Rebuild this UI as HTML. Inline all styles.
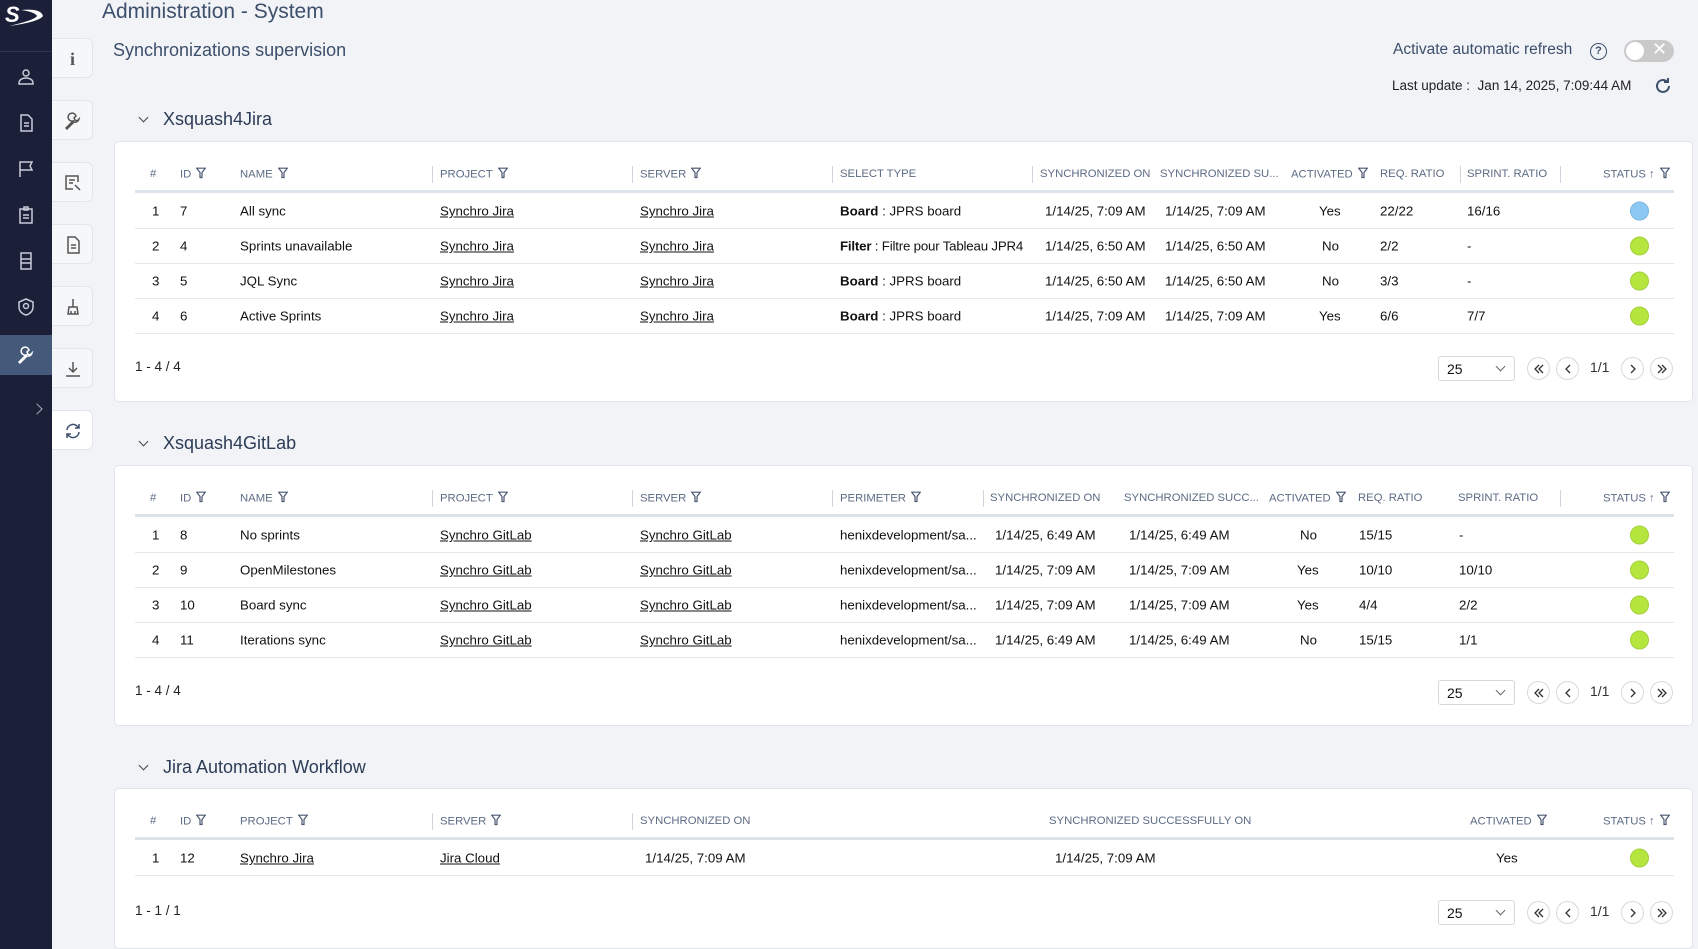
<!DOCTYPE html>
<html><head><meta charset="utf-8"><style>
*{box-sizing:border-box;margin:0;padding:0}
body{width:1698px;height:949px;background:#f1f3f7;font-family:"Liberation Sans",sans-serif;position:relative;overflow:hidden;color:#111}
.sb{position:absolute;left:0;top:0;width:52px;height:949px;background:#1b1f37}
.sb .i{position:absolute;left:16px;width:20px;height:20px;stroke:#c7ccd8;fill:none;stroke-width:1.5}
.tab{position:absolute;left:52px;width:41px;height:40px;background:#f6f7f9;border:1px solid #e2e6ec;border-left:none;border-radius:0 6px 6px 0}
.tab svg{position:absolute;left:11px;top:10px;width:20px;height:20px;stroke:#555;fill:none;stroke-width:1.5}
.t1{position:absolute;left:102px;top:0px;font-size:21px;color:#3d4f6b}
.t2{position:absolute;left:113px;top:40px;font-size:18px;color:#3d4f6b}
.sec{position:absolute;left:137px;font-size:18px;color:#2d3c55}
.sec:before{content:"";position:absolute;left:3px;top:5px;width:6px;height:6px;border-right:1.5px solid #444;border-bottom:1.5px solid #444;transform:rotate(45deg)}
.sec span{margin-left:26px}
.card{position:absolute;left:114px;width:1579px;background:#fff;border:1px solid #e1e5eb;border-radius:5px}
.r{position:absolute;left:20px;width:1539px;height:35px;border-bottom:1px solid #e3e7ec}
.h{position:absolute;left:20px;width:1539px;height:36px;top:15px;border-bottom:3px solid #dde3ea}
.r span,.h span{position:absolute;top:50%;transform:translateY(-50%);white-space:nowrap}
.r span{font-size:13.3px;color:#111}
.h span{font-size:11.3px;color:#5c6b84}
.h span.f:after{content:"";display:inline-block;margin-left:6px;width:9px;height:10px;vertical-align:-1px;background:url("data:image/svg+xml,") ;border:none}
.fi{display:inline-block;margin-left:5px;vertical-align:-1px}
.h i{position:absolute;top:9px;width:1px;height:17px;background:#d0d5dd}
u{text-decoration:underline}
.dot{width:19px;height:19px;border-radius:50%;background:#b5e63e;border:1px solid #a4cf3a}
.blue{background:#8dc8f2;border-color:#7ab6e0}
.pg{position:absolute;left:20px;font-size:13.5px;color:#222}
.sel{position:absolute;left:1323px;width:77px;height:25px;border:1px solid #d3d7de;border-radius:3px;font-size:14px;padding:4px 8px}
.sel:after{content:"";position:absolute;right:10px;top:6px;width:6px;height:6px;border-right:1px solid #666;border-bottom:1px solid #666;transform:rotate(45deg)}
.pb{position:absolute;width:23px;height:23px;border:1px solid #d6d9de;border-radius:50%}
.pb svg{position:absolute;left:5px;top:5px}
.pn{position:absolute;font-size:14px;color:#333}
</style></head><body>
<svg width="0" height="0" style="position:absolute"><defs><symbol id="fl" viewBox="0 0 10 11"><path d="M0.7 0.7h8.6L6 5v5H4V5z" fill="none" stroke="#4a5870" stroke-width="1.2"/></symbol>
<symbol id="ll" viewBox="0 0 12 12"><path d="M6 2L2 6l4 4M10 2L6 6l4 4" fill="none" stroke="#333" stroke-width="1.3"/></symbol>
<symbol id="l" viewBox="0 0 12 12"><path d="M8 2L4 6l4 4" fill="none" stroke="#333" stroke-width="1.3"/></symbol>
<symbol id="rr" viewBox="0 0 12 12"><path d="M2 2l4 4-4 4M6 2l4 4-4 4" fill="none" stroke="#333" stroke-width="1.3"/></symbol>
<symbol id="r" viewBox="0 0 12 12"><path d="M4 2l4 4-4 4" fill="none" stroke="#333" stroke-width="1.3"/></symbol></defs></svg>
<div class="sb">
<svg style="position:absolute;left:3px;top:4px" width="42" height="24" viewBox="0 0 42 24"><text x="2" y="18" font-family="Liberation Sans" font-weight="bold" font-style="italic" font-size="22" fill="#fff">S</text><path d="M18 6 Q38 4 40 12 Q36 18 6 22 Q32 16 34 12 Q32 8 18 6Z" fill="#fff"/></svg>
<div style="position:absolute;left:0;top:51px;width:52px;height:1px;background:#2d3350"></div>
<svg class="i" style="top:67px" viewBox="0 0 20 20"><circle cx="10" cy="6" r="3"/><path d="M3 17h14v-1c0-3-3-5-7-5s-7 2-7 5z"/></svg>
<svg class="i" style="top:113px" viewBox="0 0 20 20"><path d="M5 2h7l4 4v12H5z M8 10h5 M8 13h5"/></svg>
<svg class="i" style="top:159px" viewBox="0 0 20 20"><path d="M4 18V3h12l-2 4 2 4H4"/></svg>
<svg class="i" style="top:205px" viewBox="0 0 20 20"><rect x="4" y="4" width="12" height="14"/><path d="M8 2h4v3H8z M7 10h6 M7 13h6"/></svg>
<svg class="i" style="top:251px" viewBox="0 0 20 20"><rect x="5" y="2" width="10" height="16"/><path d="M5 8h10 M5 12h10"/></svg>
<svg class="i" style="top:297px" viewBox="0 0 20 20"><path d="M10 2l7 3v5c0 4-3 7-7 8-4-1-7-4-7-8V5z"/><circle cx="10" cy="9" r="2.5"/></svg>
<div style="position:absolute;left:0;top:335px;width:52px;height:40px;background:#455a7a"></div>
<svg class="i" style="top:345px;stroke:#fff" viewBox="0 0 20 20"><path d="M3 17l7-7a4 4 0 1 1 3 -5l-2 2 1 2 2 1 2-2a4 4 0 0 1-5 3l-7 7z"/></svg>
<div style="position:absolute;left:33px;top:405px;width:8px;height:8px;border-right:1.5px solid #aab;border-top:1.5px solid #aab;transform:rotate(45deg)"></div>
</div>
<div class="tab" style="top:38px"><svg viewBox="0 0 20 20"><text x="7" y="16" font-family="Liberation Serif" font-weight="bold" font-size="18" fill="#555" stroke="none">i</text></svg></div>
<div class="tab" style="top:100px"><svg viewBox="0 0 20 20"><path d="M3 17l7-7a4 4 0 1 1 3 -5l-2 2 1 2 2 1 2-2a4 4 0 0 1-5 3l-7 7z"/></svg></div>
<div class="tab" style="top:162px"><svg viewBox="0 0 20 20"><path d="M15 9V3H3v13h7 M6 7h6 M6 10h4 M12 12l5 5"/></svg></div>
<div class="tab" style="top:224px"><svg viewBox="0 0 20 20"><path d="M5 2h7l4 4v12H5z M8 10h5 M8 13h5"/></svg></div>
<div class="tab" style="top:286px"><svg viewBox="0 0 20 20"><path d="M10 2v8 M6 10h8l1 7H5z M8 14v3 M12 14v3"/></svg></div>
<div class="tab" style="top:348px"><svg viewBox="0 0 20 20"><path d="M10 3v10 M6 9l4 4 4-4 M3 17h14"/></svg></div>
<div class="tab" style="top:410px;background:#fff"><svg viewBox="0 0 20 20" style="stroke:#3d4f6b"><path d="M4 9a6 6 0 0 1 10-4l2 2 M16 3v4h-4 M16 11a6 6 0 0 1-10 4l-2-2 M4 17v-4h4"/></svg></div>

<div class="t1">Administration - System</div>
<div class="t2">Synchronizations supervision</div>
<div style="position:absolute;left:1393px;top:41px;font-size:15.5px;color:#3d4f6b">Activate automatic refresh</div>
<div style="position:absolute;left:1590px;top:43px;width:17px;height:17px;border:1.5px solid #3d4f6b;border-radius:50%;font-size:11px;text-align:center;line-height:14px;color:#3d4f6b;font-weight:bold">?</div>
<div style="position:absolute;left:1624px;top:40px;width:50px;height:22px;border-radius:11px;background:#c9c9c9"><div style="position:absolute;left:2px;top:2px;width:18px;height:18px;border-radius:50%;background:#fff"></div><div style="position:absolute;left:28px;top:-1px;color:#fff;font-size:18px">✕</div></div>
<div style="position:absolute;left:1392px;top:78px;font-size:13.5px;color:#222">Last update :&nbsp; Jan 14, 2025, 7:09:44 AM</div>
<svg style="position:absolute;left:1653px;top:76px" width="20" height="20" viewBox="0 0 20 20" fill="none" stroke="#3d4f6b" stroke-width="2"><path d="M16 10a6 6 0 1 1-2-4.5 M15 2v4h-4"/></svg>

<div class="sec" style="top:109px"><span>Xsquash4Jira</span></div>
<div class="card" style="top:141px;height:261px">
<div class="h"><span style="left:15px">#</span><span style="left:45px">ID<svg class="fi" width="10" height="11"><use href="#fl"/></svg></span><span style="left:105px">NAME<svg class="fi" width="10" height="11"><use href="#fl"/></svg></span><i style="left:297px"></i><span style="left:305px">PROJECT<svg class="fi" width="10" height="11"><use href="#fl"/></svg></span><i style="left:497px"></i><span style="left:505px">SERVER<svg class="fi" width="10" height="11"><use href="#fl"/></svg></span><i style="left:697px"></i><span style="left:705px">SELECT TYPE</span><i style="left:897px"></i><span style="left:905px">SYNCHRONIZED ON</span><span style="left:1025px">SYNCHRONIZED SU...</span><span style="left:1156px">ACTIVATED<svg class="fi" width="10" height="11"><use href="#fl"/></svg></span><span style="left:1245px">REQ. RATIO</span><i style="left:1325px"></i><span style="left:1332px">SPRINT. RATIO</span><i style="left:1425px"></i><span style="left:1468px">STATUS ↑<svg class="fi" width="10" height="11"><use href="#fl"/></svg></span></div>
<div class="r" style="top:52px"><span style="left:17px">1</span><span style="left:45px">7</span><span style="left:105px">All sync</span><span style="left:305px"><u>Synchro Jira</u></span><span style="left:505px"><u>Synchro Jira</u></span><span style="left:705px"><b>Board</b> : JPRS board</span><span style="left:910px">1/14/25, 7:09 AM</span><span style="left:1030px">1/14/25, 7:09 AM</span><span style="left:1184px">Yes</span><span style="left:1245px">22/22</span><span style="left:1332px">16/16</span><span class="dot blue" style="left:1495px"></span></div>
<div class="r" style="top:87px"><span style="left:17px">2</span><span style="left:45px">4</span><span style="left:105px">Sprints unavailable</span><span style="left:305px"><u>Synchro Jira</u></span><span style="left:505px"><u>Synchro Jira</u></span><span style="left:705px;letter-spacing:-0.2px"><b>Filter</b> : Filtre pour Tableau JPR4</span><span style="left:910px">1/14/25, 6:50 AM</span><span style="left:1030px">1/14/25, 6:50 AM</span><span style="left:1187px">No</span><span style="left:1245px">2/2</span><span style="left:1332px">-</span><span class="dot" style="left:1495px"></span></div>
<div class="r" style="top:122px"><span style="left:17px">3</span><span style="left:45px">5</span><span style="left:105px">JQL Sync</span><span style="left:305px"><u>Synchro Jira</u></span><span style="left:505px"><u>Synchro Jira</u></span><span style="left:705px"><b>Board</b> : JPRS board</span><span style="left:910px">1/14/25, 6:50 AM</span><span style="left:1030px">1/14/25, 6:50 AM</span><span style="left:1187px">No</span><span style="left:1245px">3/3</span><span style="left:1332px">-</span><span class="dot" style="left:1495px"></span></div>
<div class="r" style="top:157px"><span style="left:17px">4</span><span style="left:45px">6</span><span style="left:105px">Active Sprints</span><span style="left:305px"><u>Synchro Jira</u></span><span style="left:505px"><u>Synchro Jira</u></span><span style="left:705px"><b>Board</b> : JPRS board</span><span style="left:910px">1/14/25, 7:09 AM</span><span style="left:1030px">1/14/25, 7:09 AM</span><span style="left:1184px">Yes</span><span style="left:1245px">6/6</span><span style="left:1332px">7/7</span><span class="dot" style="left:1495px"></span></div>
<div class="pg" style="top:217px">1 - 4 / 4</div>
<div class="sel" style="top:214px">25</div>
<div class="pb" style="left:1412px;top:215px"><svg width="12" height="12"><use href="#ll"/></svg></div><div class="pb" style="left:1441px;top:215px"><svg width="12" height="12"><use href="#l"/></svg></div><div class="pn" style="left:1475px;top:217px">1/1</div><div class="pb" style="left:1506px;top:215px"><svg width="12" height="12"><use href="#r"/></svg></div><div class="pb" style="left:1535px;top:215px"><svg width="12" height="12"><use href="#rr"/></svg></div>
</div>

<div class="sec" style="top:433px"><span>Xsquash4GitLab</span></div>
<div class="card" style="top:465px;height:261px">
<div class="h"><span style="left:15px">#</span><span style="left:45px">ID<svg class="fi" width="10" height="11"><use href="#fl"/></svg></span><span style="left:105px">NAME<svg class="fi" width="10" height="11"><use href="#fl"/></svg></span><i style="left:297px"></i><span style="left:305px">PROJECT<svg class="fi" width="10" height="11"><use href="#fl"/></svg></span><i style="left:497px"></i><span style="left:505px">SERVER<svg class="fi" width="10" height="11"><use href="#fl"/></svg></span><i style="left:697px"></i><span style="left:705px">PERIMETER<svg class="fi" width="10" height="11"><use href="#fl"/></svg></span><i style="left:848px"></i><span style="left:855px">SYNCHRONIZED ON</span><span style="left:989px">SYNCHRONIZED SUCC...</span><span style="left:1134px">ACTIVATED<svg class="fi" width="10" height="11"><use href="#fl"/></svg></span><span style="left:1223px">REQ. RATIO</span><span style="left:1323px">SPRINT. RATIO</span><i style="left:1425px"></i><span style="left:1468px">STATUS ↑<svg class="fi" width="10" height="11"><use href="#fl"/></svg></span></div>
<div class="r" style="top:52px"><span style="left:17px">1</span><span style="left:45px">8</span><span style="left:105px">No sprints</span><span style="left:305px"><u>Synchro GitLab</u></span><span style="left:505px"><u>Synchro GitLab</u></span><span style="left:705px">henixdevelopment/sa...</span><span style="left:860px">1/14/25, 6:49 AM</span><span style="left:994px">1/14/25, 6:49 AM</span><span style="left:1165px">No</span><span style="left:1224px">15/15</span><span style="left:1324px">-</span><span class="dot" style="left:1495px"></span></div>
<div class="r" style="top:87px"><span style="left:17px">2</span><span style="left:45px">9</span><span style="left:105px">OpenMilestones</span><span style="left:305px"><u>Synchro GitLab</u></span><span style="left:505px"><u>Synchro GitLab</u></span><span style="left:705px">henixdevelopment/sa...</span><span style="left:860px">1/14/25, 7:09 AM</span><span style="left:994px">1/14/25, 7:09 AM</span><span style="left:1162px">Yes</span><span style="left:1224px">10/10</span><span style="left:1324px">10/10</span><span class="dot" style="left:1495px"></span></div>
<div class="r" style="top:122px"><span style="left:17px">3</span><span style="left:45px">10</span><span style="left:105px">Board sync</span><span style="left:305px"><u>Synchro GitLab</u></span><span style="left:505px"><u>Synchro GitLab</u></span><span style="left:705px">henixdevelopment/sa...</span><span style="left:860px">1/14/25, 7:09 AM</span><span style="left:994px">1/14/25, 7:09 AM</span><span style="left:1162px">Yes</span><span style="left:1224px">4/4</span><span style="left:1324px">2/2</span><span class="dot" style="left:1495px"></span></div>
<div class="r" style="top:157px"><span style="left:17px">4</span><span style="left:45px">11</span><span style="left:105px">Iterations sync</span><span style="left:305px"><u>Synchro GitLab</u></span><span style="left:505px"><u>Synchro GitLab</u></span><span style="left:705px">henixdevelopment/sa...</span><span style="left:860px">1/14/25, 6:49 AM</span><span style="left:994px">1/14/25, 6:49 AM</span><span style="left:1165px">No</span><span style="left:1224px">15/15</span><span style="left:1324px">1/1</span><span class="dot" style="left:1495px"></span></div>
<div class="pg" style="top:217px">1 - 4 / 4</div>
<div class="sel" style="top:214px">25</div>
<div class="pb" style="left:1412px;top:215px"><svg width="12" height="12"><use href="#ll"/></svg></div><div class="pb" style="left:1441px;top:215px"><svg width="12" height="12"><use href="#l"/></svg></div><div class="pn" style="left:1475px;top:217px">1/1</div><div class="pb" style="left:1506px;top:215px"><svg width="12" height="12"><use href="#r"/></svg></div><div class="pb" style="left:1535px;top:215px"><svg width="12" height="12"><use href="#rr"/></svg></div>
</div>

<div class="sec" style="top:757px"><span>Jira Automation Workflow</span></div>
<div class="card" style="top:788px;height:161px">
<div class="h"><span style="left:15px">#</span><span style="left:45px">ID<svg class="fi" width="10" height="11"><use href="#fl"/></svg></span><span style="left:105px">PROJECT<svg class="fi" width="10" height="11"><use href="#fl"/></svg></span><i style="left:297px"></i><span style="left:305px">SERVER<svg class="fi" width="10" height="11"><use href="#fl"/></svg></span><i style="left:497px"></i><span style="left:505px">SYNCHRONIZED ON</span><span style="left:914px">SYNCHRONIZED SUCCESSFULLY ON</span><span style="left:1335px">ACTIVATED<svg class="fi" width="10" height="11"><use href="#fl"/></svg></span><span style="left:1468px">STATUS ↑<svg class="fi" width="10" height="11"><use href="#fl"/></svg></span></div>
<div class="r" style="top:52px"><span style="left:17px">1</span><span style="left:45px">12</span><span style="left:105px"><u>Synchro Jira</u></span><span style="left:305px"><u>Jira Cloud</u></span><span style="left:510px">1/14/25, 7:09 AM</span><span style="left:920px">1/14/25, 7:09 AM</span><span style="left:1361px">Yes</span><span class="dot" style="left:1495px"></span></div>
<div class="pg" style="top:114px">1 - 1 / 1</div>
<div class="sel" style="top:111px">25</div>
<div class="pb" style="left:1412px;top:112px"><svg width="12" height="12"><use href="#ll"/></svg></div><div class="pb" style="left:1441px;top:112px"><svg width="12" height="12"><use href="#l"/></svg></div><div class="pn" style="left:1475px;top:114px">1/1</div><div class="pb" style="left:1506px;top:112px"><svg width="12" height="12"><use href="#r"/></svg></div><div class="pb" style="left:1535px;top:112px"><svg width="12" height="12"><use href="#rr"/></svg></div>
</div>
</body></html>
